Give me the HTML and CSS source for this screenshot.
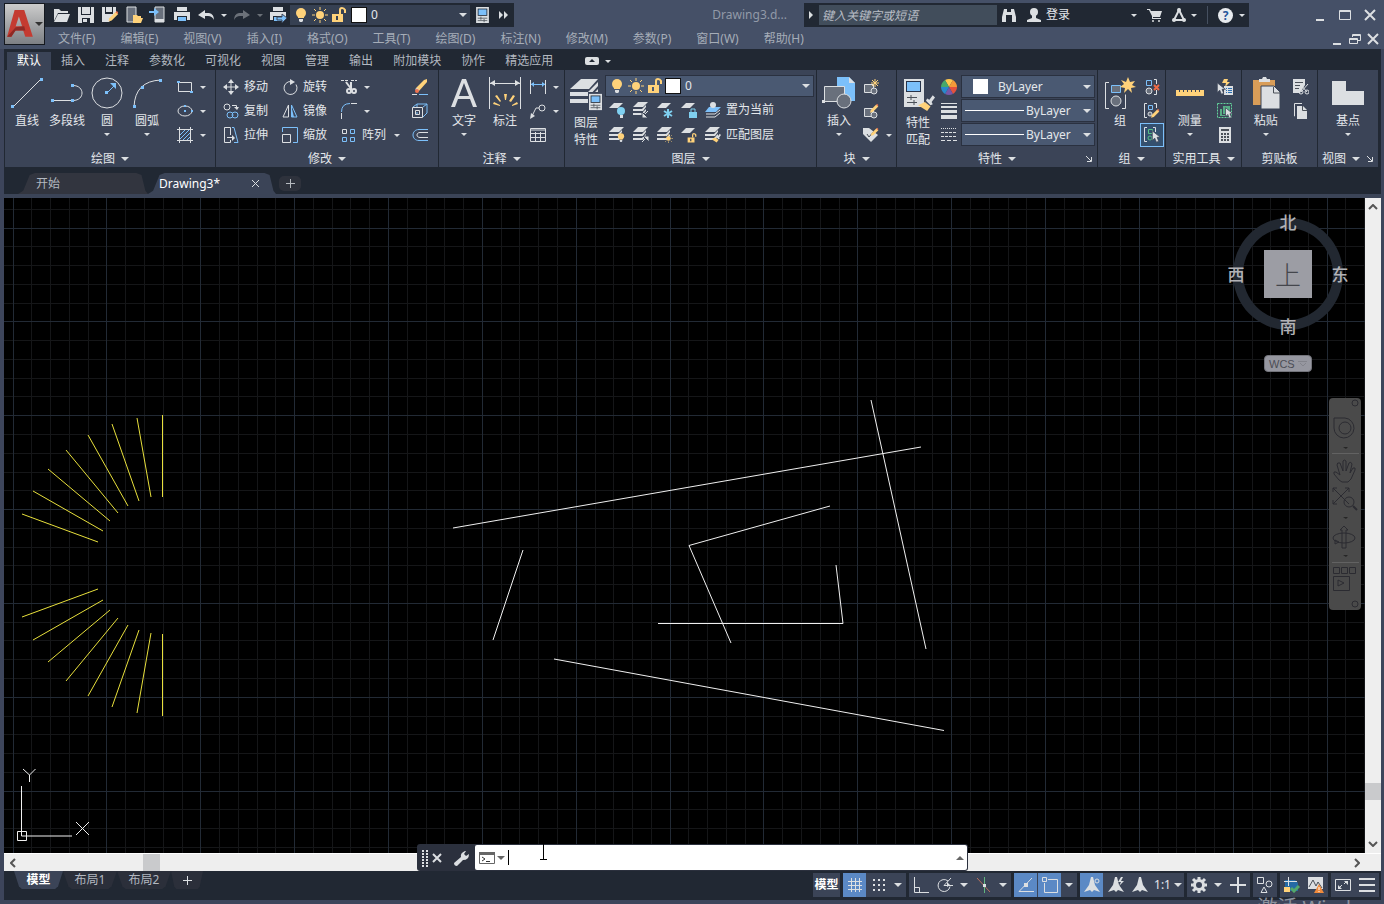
FILE: index.html
```
<!DOCTYPE html>
<html lang="zh-CN">

<head>
    <meta charset="UTF-8">
    <meta name="viewport" content="width=device-width, initial-scale=1.0">
    <title>Drawing3.dwg</title>
    <link rel="stylesheet" href="styles.css">
</head>

<body>
    <!-- Símbolos reutilizados -->
    <svg class="symbols" aria-hidden="true">
        <symbol id="bulb" viewBox="0 0 16 16"><circle class="fy" cx="8" cy="6" r="5"/><path class="fy" d="M5 9h6v2H5z"/><path class="fw" d="M6 12h4v2l-1 1H7l-1-1z"/></symbol>
        <symbol id="sun" viewBox="0 0 16 16"><circle class="fy" cx="8" cy="8" r="4"/><path class="ly" d="M8 0v3M8 13v3M0 8h3M13 8h3M2 2l2 2M12 12l2 2M14 2l-2 2M4 12l-2 2"/></symbol>
        <symbol id="unlock" viewBox="0 0 16 16"><path class="fy" fill-rule="evenodd" d="M1 7h11v8H1zM5 9v4h2V9z"/><path class="ly thick" d="M9 7V3q0-2 2-2t3 2v3"/></symbol>
        <symbol id="sheets" viewBox="0 0 16 16"><path class="fw" d="M5 0h10l-5 5H0zM0 7h9l4-4v2l-3 4H0zM0 11h9l4-4v2l-3 4H0z"/></symbol>
        <symbol id="sheet" viewBox="0 0 16 16"><path class="fw" d="M5 1h9L9 6H0z"/></symbol>
        <symbol id="pencil" viewBox="0 0 16 16"><path class="fy" d="M12 2l3 3-8 8-4 1 1-4z"/><path class="fr" d="M13 1l2 2-1 2-2-2z"/></symbol>
        <symbol id="brush" viewBox="0 0 16 16"><path class="fw" d="M11 5l3-4 2 2-3 4 1 2-2 1-4-4 1-2z"/><path class="fy" d="M7 7l5 4-3 4-8-5z"/></symbol>
        <symbol id="cursor" viewBox="0 0 16 16"><path class="fw edge" d="M4 1v12l3-3 2 5 3-1-2-5h4z"/></symbol>
        <symbol id="palette" viewBox="0 0 16 20"><path class="fw" d="M0 0h16v20H0z"/><path fill="#1f2937" d="M2 2h12v9H2z"/><path class="fb" d="M3 3h10v7H3z"/><path class="dark" d="M2 14h12M2 17h12M6 12v4M10 15v4"/></symbol>
        <symbol id="annot" viewBox="0 0 18 18"><path class="fw" d="M8 1h2l2 8 5 7-6-2-2 2-2-2-6 2 5-7z"/></symbol>
        <symbol id="printer" viewBox="0 0 18 18"><path class="fw" d="M4 1h10v4H4zM1 6h16v8h-3v-4H4v4H1z"/><path class="fb" d="M5 11h8v4H5z"/></symbol>
    </svg>

    <div class="app">
        <header class="titlebar">
            <button class="app-button" aria-label="应用程序菜单">
                <svg width="27" height="30" viewBox="0 0 25 28"><path fill="#c43b31" fill-rule="evenodd" d="M7 1h9l8 25h-7l-2-6H7l-3 6H0zM11 7l-3 9h6z"/><path fill="#8f2a25" d="M0 26l8-9 8-1 1 4H8l-4 6z"/></svg>
                <span class="caret large ink"></span>
            </button>
            <div class="header-main">
                <div class="title-row">
                    <div class="quick-access">
                        <button class="tool" aria-label="打开"><svg width="18" height="18" viewBox="0 0 18 18"><path class="fw" d="M1 3h5l2 2h7v2H5l-4 8z"/><path class="fw" d="M5 8h12l-3 8H1z"/></svg></button>
                        <button class="tool" aria-label="保存"><svg width="18" height="18" viewBox="0 0 18 18"><path class="fw" fill-rule="evenodd" d="M1 1h16v16H1zM4 1v8h10V1zM5 12v5h8v-5z"/><path class="fw" d="M5 1h8v7H5zM6 13h4v3H6z"/></svg></button>
                        <button class="tool" aria-label="另存为"><svg width="18" height="18" viewBox="0 0 18 18"><path class="fw" fill-rule="evenodd" d="M1 1h14v5l-7 10H1zM4 1v7h8V1z"/><path class="fw" d="M5 1h6v5H5z"/><use href="#pencil" x="5" y="4" width="13" height="13"/></svg></button>
                        <button class="tool" aria-label="从移动设备打开"><svg width="18" height="18" viewBox="0 0 18 18"><path class="fg lw" d="M2 1h9v15H2z"/><path class="fy" d="M8 9h4l1 1h3v2h2l-2 5H8z"/></svg></button>
                        <button class="tool" aria-label="保存到移动设备"><svg width="18" height="18" viewBox="0 0 18 18"><path class="fg lw" d="M6 1h9v15H6z"/><path class="fw" d="M6 13h9v3H6z"/><path class="fb" d="M0 5h5V2l5 4-5 4V7H0z"/></svg></button>
                        <button class="tool" aria-label="打印"><svg width="18" height="18"><use href="#printer"/></svg></button>
                        <button class="tool" aria-label="放弃"><svg width="18" height="18" viewBox="0 0 18 18"><path class="fw" d="M1 9l7-5v3h4q5 1 5 7-2-4-6-4H8v3z"/></svg></button>
                        <button class="drop" aria-label="放弃列表"><span class="caret"></span></button>
                        <button class="tool dim" aria-label="重做"><svg width="18" height="18" viewBox="0 0 18 18"><path class="fw" d="M17 9l-7-5v3H6q-5 1-5 7 2-4 6-4h3v3z"/></svg></button>
                        <button class="drop dim" aria-label="重做列表"><span class="caret"></span></button>
                        <button class="tool" aria-label="批处理打印"><svg width="18" height="18"><use href="#printer"/><path class="fb edge" d="M8 11h5V8l5 4-5 5v-3H8z"/></svg></button>
                        <div class="layer-select quick">
                            <svg width="16" height="16"><use href="#bulb"/></svg>
                            <svg width="16" height="16"><use href="#sun"/></svg>
                            <svg width="16" height="16"><use href="#unlock"/></svg>
                            <span class="swatch"></span>
                            <select aria-label="当前图层"><option>0</option></select>
                            <span class="caret large"></span>
                        </div>
                        <button class="tool" aria-label="图层特性"><svg width="13" height="16" viewBox="0 0 16 20"><use href="#palette"/></svg></button>
                        <button class="drop wide" aria-label="更多"><svg width="10" height="8" viewBox="0 0 10 8"><path class="fw" d="M0 0l4 4-4 4zM5 0l4 4-4 4z"/></svg></button>
                    </div>
                    <h1 class="doc-title">Drawing3.d...</h1>
                    <div class="info-center">
                        <span class="arrow-right"></span>
                        <input class="search" type="text" placeholder="键入关键字或短语" aria-label="搜索">
                        <button class="tool" aria-label="查找"><svg width="16" height="16" viewBox="0 0 16 16"><path class="fw" d="M3 2h3v3h4V2h3l2 8v5h-4V8H5v7H1v-5z"/></svg></button>
                        <button class="login"><svg width="16" height="16" viewBox="0 0 16 16"><circle class="fw" cx="8" cy="5" r="4"/><path class="fw" d="M6 8h4v3l5 2v2H1v-2l5-2z"/></svg>登录<span class="caret"></span></button>
                        <button class="tool" aria-label="应用商店"><svg width="16" height="16" viewBox="0 0 16 16"><path class="fw" d="M0 2h3l1 2h11l-2 6H6v1h8v1H5V9L2 3H0z"/><circle class="fw" cx="6" cy="14" r="1"/><circle class="fw" cx="12" cy="14" r="1"/></svg></button>
                        <button class="tool" aria-label="保持连接"><svg width="16" height="16" viewBox="0 0 16 16"><path class="lw thick" d="M8 3l5 10H3z"/><circle class="fw" cx="8" cy="3" r="2"/><circle class="fw" cx="3" cy="13" r="2"/><circle class="fw" cx="13" cy="13" r="2"/></svg></button>
                        <span class="caret"></span>
                        <span class="separator"></span>
                        <button class="help" aria-label="帮助">?</button>
                        <span class="caret"></span>
                    </div>
                    <div class="window-buttons">
                        <button aria-label="最小化"><svg width="14" height="14" viewBox="0 0 14 14"><path class="lw thick" d="M3 12h8"/></svg></button>
                        <button aria-label="最大化"><svg width="14" height="14" viewBox="0 0 14 14"><path class="lw" d="M1.500 2.500h11v9h-11zM1 3.500h12"/></svg></button>
                        <button aria-label="关闭"><svg width="14" height="14" viewBox="0 0 14 14"><path class="lw thick" d="M2 2l10 10M12 2L2 12"/></svg></button>
                    </div>
                </div>
                <div class="menu-row">
                    <nav class="menubar" aria-label="菜单">
                        <a href="#">文件(F)</a><a href="#">编辑(E)</a><a href="#">视图(V)</a><a href="#">插入(I)</a><a href="#">格式(O)</a><a href="#">工具(T)</a><a href="#">绘图(D)</a><a href="#">标注(N)</a><a href="#">修改(M)</a><a href="#">参数(P)</a><a href="#">窗口(W)</a><a href="#">帮助(H)</a>
                    </nav>
                    <div class="window-buttons small">
                        <button aria-label="最小化图形"><svg width="14" height="14" viewBox="0 0 14 14"><path class="lw thick" d="M3 12h8"/></svg></button>
                        <button aria-label="还原图形"><svg width="14" height="14" viewBox="0 0 14 14"><path class="lw" d="M4.500 5V2.500h8v6H9M4 3.500h8M1.500 6.500h8v5h-8zM1 7.500h8"/></svg></button>
                        <button aria-label="关闭图形"><svg width="14" height="14" viewBox="0 0 14 14"><path class="lw thick" d="M2 2l10 10M12 2L2 12"/></svg></button>
                    </div>
                </div>
            </div>
        </header>

        <nav class="ribbon-tabs" aria-label="功能区选项卡">
            <button class="active">默认</button><button>插入</button><button>注释</button><button>参数化</button><button>可视化</button><button>视图</button><button>管理</button><button>输出</button><button>附加模块</button><button>协作</button><button>精选应用</button>
            <button class="ribbon-toggle" aria-label="最小化功能区"><svg width="14" height="8" viewBox="0 0 14 8"><rect class="fw" width="14" height="8" rx="2"/><path fill="#212833" d="M4 5l3-3 3 3z"/></svg><span class="caret"></span></button>
        </nav>

        <div class="ribbon">
            <!-- Desenho -->
            <section class="panel">
                <div class="panel-body">
                    <button class="big"><svg width="34" height="32" viewBox="0 0 34 32"><path class="lw" d="M3 30L31 2"/><path class="fb" d="M1 28h3v3H1zM30 1h3v3h-3z"/></svg>直线</button>
                    <button class="big"><svg width="34" height="32" viewBox="0 0 34 32"><path class="lw" d="M3 23.500h20c12 0 12-15 0-15"/><path class="fb" d="M1 22h3v3H1zM21 22h3v3h-3zM21 7h3v3h-3z"/></svg>多段线</button>
                    <button class="big"><svg width="34" height="32" viewBox="0 0 34 32"><circle class="lw" cx="17" cy="16" r="15"/><path class="lb" d="M17 16l8-8"/><path class="fb" d="M15 14h3v3h-3zM26 6v6l-6-6z"/></svg>圆<span class="caret"></span></button>
                    <button class="big"><svg width="34" height="32" viewBox="0 0 34 32"><path class="lw" d="M4 30Q5 4 31 3"/><path class="fb" d="M3 28h3v3H3zM11 9h3v3h-3zM29 2h3v3h-3z"/></svg>圆弧<span class="caret"></span></button>
                    <div class="stack first">
                        <div class="line"><button class="tool" aria-label="矩形"><svg width="16" height="16" viewBox="0 0 16 16"><path class="lw" d="M1.500 3.500h13v9h-13z"/><path class="fb" d="M0 2h3v2H0zM13 12h3v2h-3z"/></svg></button><span class="caret"></span></div>
                        <div class="line"><button class="tool" aria-label="椭圆"><svg width="16" height="16" viewBox="0 0 16 16"><ellipse class="lw" cx="8" cy="8" rx="7" ry="5"/><path class="fb" d="M7 7h2v2H7zM14 7h2v2h-2zM7 2h2v2H7z"/></svg></button><span class="caret"></span></div>
                        <div class="line"><button class="tool" aria-label="图案填充"><svg width="16" height="16" viewBox="0 0 16 16"><path class="lb" d="M3 8l5-5M3 12l9-9M6 13l7-7M10 13l3-3"/><path class="lw" d="M2.500 0v16M13.500 0v16M0 2.500h16M0 13.500h16"/></svg></button><span class="caret"></span></div>
                    </div>
                </div>
                <button class="panel-title">绘图<span class="caret large"></span></button>
            </section>

            <!-- Modificação -->
            <section class="panel">
                <div class="panel-body modify">
                    <div class="stack">
                        <button class="command"><svg width="16" height="16" viewBox="0 0 16 16"><path class="lw" d="M8 2v12M2 8h12"/><path class="fw" d="M8 0l3 4H5zM8 16l3-4H5zM0 8l4-3v6zM16 8l-4-3v6z"/></svg>移动</button>
                        <button class="command"><svg width="16" height="16" viewBox="0 0 16 16"><circle class="lw" cx="4" cy="4" r="3"/><path class="lw" d="M9 2.500h4.500V5"/><path class="fw" d="M11 4h5l-2 3z"/><circle class="lb" cx="7" cy="12" r="3"/><circle class="lb" cx="12" cy="12" r="3"/></svg>复制</button>
                        <button class="command"><svg width="16" height="16" viewBox="0 0 16 16"><path class="lw" d="M7.500 8V.500h-6v15h6V13M4 10.500h6"/><path class="fw" d="M9 8l3 3-3 3z"/><path class="lb" d="M9 .500h2l4 15h-4"/></svg>拉伸</button>
                    </div>
                    <div class="stack">
                        <button class="command"><svg width="16" height="16" viewBox="0 0 16 16"><path class="lw" d="M9 2.500a6.500 6.500 0 1 0 5 3"/><path class="fw" d="M8 0l5 3-5 3z"/></svg>旋转</button>
                        <button class="command"><svg width="16" height="16" viewBox="0 0 16 16"><path class="lw" d="M6.500 2v12H1z"/><path class="lb" d="M9.500 2v12H15z"/><path class="fb" d="M9 2l3 12H9z"/></svg>镜像</button>
                        <button class="command"><svg width="16" height="16" viewBox="0 0 16 16"><path class="lb" d="M.500 5V.500h15v15H11"/><path class="lw" d="M.500 7.500h8v8h-8z"/></svg>缩放</button>
                    </div>
                    <div class="stack array">
                        <div class="line"><button class="tool" aria-label="修剪"><svg width="16" height="16" viewBox="0 0 16 16"><path class="lw" d="M0 1.500h7M10 1.500h6" stroke-dasharray="3 1"/><path class="lw thick" d="M5 3l6 8M10 3v7"/><circle class="lw thick" cx="8" cy="12" r="2"/><circle class="lw thick" cx="13" cy="12" r="2"/></svg></button><span class="caret"></span></div>
                        <div class="line"><button class="tool" aria-label="圆角"><svg width="16" height="16" viewBox="0 0 16 16"><path class="lb" d="M.500 9q0-8.500 8.500-8.500"/><path class="lw" d="M10 .500h6M.500 10v6"/></svg></button><span class="caret"></span></div>
                        <button class="command"><svg width="16" height="16" viewBox="0 0 16 16"><path class="lw" d="M1.500 2.500h4v4h-4z"/><path class="lb" d="M9.500 2.500h4v4h-4zM1.500 10.500h4v4h-4zM9.500 10.500h4v4h-4z"/></svg>阵列<span class="caret"></span></button>
                    </div>
                    <div class="stack">
                        <button class="tool" aria-label="删除"><svg width="16" height="16" viewBox="0 0 16 16"><path class="fy" d="M12 1l3-1v3l-8 9-3-3z"/><path class="fw" d="M5 9l2 2-1 2-3-3z"/><circle class="fr" cx="5" cy="12" r="2"/><path class="lw" d="M0 15.500h5"/><path class="lb" d="M7 15.500h9"/></svg></button>
                        <button class="tool" aria-label="分解"><svg width="16" height="16" viewBox="0 0 16 16"><path class="lb" d="M1 4l4-3h10v9l-4 4M5 1v4M15 1l-4 3M5 9v2"/><path class="lw" d="M.500 4.500h10v10H.500zM3.500 7.500h4v4h-4z"/></svg></button>
                        <button class="tool" aria-label="偏移"><svg width="16" height="16" viewBox="0 0 16 16"><path class="lb" d="M16 2.500H7c-8 0-8 11 0 11h9"/><path class="lw" d="M16 5.500H8c-4 0-4 5 0 5h8"/></svg></button>
                    </div>
                </div>
                <button class="panel-title">修改<span class="caret large"></span></button>
            </section>

            <!-- Anotação -->
            <section class="panel">
                <div class="panel-body annotate">
                    <button class="big"><svg width="34" height="32" viewBox="0 0 34 32"><path class="fw" fill-rule="evenodd" d="M15 2h4l11 28h-4l-3-8H11l-3 8H4zM17 6l-5 13h10z"/></svg>文字<span class="caret"></span></button>
                    <button class="big"><svg width="34" height="32" viewBox="0 0 34 32"><path class="lw" d="M1.500 0v32M32.500 0v32M2 6.500h30"/><path class="fw" d="M2 6l5-3v6zM32 6l-5-3v6z"/><path class="fy" d="M16 17h3l-1 6h-1zM7 19l2-1 4 6-1 1zM25 18l2 1-4 6-2-1zM5 27l1-2 6 3v1zM29 25l1 2-6 2v-1z"/></svg>标注</button>
                    <div class="stack">
                        <div class="line"><button class="tool" aria-label="线性标注"><svg width="16" height="16" viewBox="0 0 16 16"><path class="lw" d="M.500 1v14M15.500 1v14"/><path class="lb" d="M1 5.500h14"/><path class="fb" d="M1 5l3-2v5zM15 5l-3-2v5z"/></svg></button><span class="caret"></span></div>
                        <div class="line"><button class="tool" aria-label="引线"><svg width="16" height="16" viewBox="0 0 16 16"><circle class="lw" cx="12" cy="5" r="3"/><path class="lw" d="M9 5H6L2 13"/><path class="fw" d="M0 16l1-6 4 3z"/></svg></button><span class="caret"></span></div>
                        <button class="tool" aria-label="表格"><svg width="16" height="16" viewBox="0 0 16 16"><path class="lw" d="M.500 1.500h15v13H.500zM1 3h14M0 6.500h16M0 10.500h16M5.500 5v10M10.500 5v10"/></svg></button>
                    </div>
                </div>
                <button class="panel-title">注释<span class="caret large"></span></button>
            </section>

            <!-- Camadas -->
            <section class="panel">
                <div class="panel-body">
                    <button class="big two"><svg width="34" height="32" viewBox="0 0 34 32"><path class="fw" d="M12 0h17l-9 10H1zM1 13h18l10-10v4l-9 10H1zM1 20h18l10-10v4l-9 10H1z"/><path fill="#3b4457" d="M19 13h15v19H19z"/><use href="#palette" x="20" y="14" width="13" height="18"/></svg>图层<br>特性</button>
                    <div class="stack grow">
                        <div class="layer-select">
                            <svg width="16" height="16"><use href="#bulb"/></svg>
                            <svg width="16" height="16"><use href="#sun"/></svg>
                            <svg width="16" height="16"><use href="#unlock"/></svg>
                            <span class="swatch"></span>
                            <select aria-label="图层"><option>0</option></select>
                            <span class="caret large"></span>
                        </div>
                        <div class="line">
                            <button class="tool" aria-label="关"><svg width="16" height="16"><use href="#sheet"/><circle cx="12" cy="9" r="4" fill="#7fd0f0"/><path class="fw" d="M11 13h3v3h-3z"/></svg></button>
                            <button class="tool" aria-label="隔离"><svg width="16" height="16"><use href="#sheets"/><path class="lw" d="M15 9l-5 5"/><path class="fw edge" d="M9 10v6h6z"/></svg></button>
                            <button class="tool" aria-label="冻结"><svg width="16" height="16"><use href="#sheet"/><path stroke="#7fd0f0" stroke-width="2" d="M11 7v9M7 9l8 5M15 9l-8 5"/></svg></button>
                            <button class="tool" aria-label="锁定"><svg width="16" height="16"><use href="#sheet"/><path fill="#7fd0f0" d="M8 10h8v6H8z"/><path fill="none" stroke="#7fd0f0" d="M10 10V7h4v3"/></svg></button>
                            <button class="command"><svg width="16" height="16" viewBox="0 0 16 16"><path class="fb" d="M4 5h12l-5 5H0z"/><circle class="fw" cx="8" cy="3" r="3"/><path class="lw" d="M1 12h9l5-4M1 15h9l5-4"/></svg>置为当前</button>
                        </div>
                        <div class="line">
                            <button class="tool" aria-label="打开所有图层"><svg width="16" height="16"><use href="#sheets"/><use href="#bulb" x="7" y="5" width="10" height="11"/></svg></button>
                            <button class="tool" aria-label="取消隔离"><svg width="16" height="16"><use href="#sheets"/><path class="lw" d="M9 15l5-5"/><path class="fw edge" d="M10 9h6v6z"/></svg></button>
                            <button class="tool" aria-label="解冻"><svg width="16" height="16"><use href="#sheets"/><use href="#sun" x="7" y="7" width="9" height="9"/></svg></button>
                            <button class="tool" aria-label="解锁"><svg width="16" height="16"><use href="#sheet"/><use href="#unlock" x="6" y="6" width="10" height="10"/></svg></button>
                            <button class="command"><svg width="16" height="16"><use href="#sheets"/><use href="#brush" x="6" y="6" width="10" height="10"/></svg>匹配图层</button>
                        </div>
                    </div>
                </div>
                <button class="panel-title">图层<span class="caret large"></span></button>
            </section>

            <!-- Bloco -->
            <section class="panel">
                <div class="panel-body">
                    <button class="big"><svg width="34" height="32" viewBox="0 0 34 32"><path class="fb" d="M15 0h12l6 6v18H15z"/><path class="fw" d="M27 0l6 6h-6z"/><path class="fg lw" d="M2.500 9.500h20v15h-20z"/><circle class="fg lw" cx="22" cy="24" r="7"/><path class="fw" d="M0 23h3v3H0z"/></svg>插入<span class="caret"></span></button>
                    <div class="stack">
                        <button class="tool" aria-label="创建块"><svg width="16" height="16" viewBox="0 0 16 16"><path class="fg lw" d="M1.500 5.500h9v8h-9z"/><circle class="fg lw" cx="11" cy="12" r="3"/><path class="ly" d="M12 0v8M8 4h8M9 1l6 6M15 1L9 7"/></svg></button>
                        <button class="tool" aria-label="编辑块"><svg width="16" height="16" viewBox="0 0 16 16"><path class="fg lw" d="M1.500 5.500h9v8h-9z"/><circle class="fg lw" cx="11" cy="12" r="3"/><use href="#pencil" x="5" y="0" width="11" height="11"/></svg></button>
                        <div class="line"><button class="tool" aria-label="编辑属性"><svg width="16" height="16" viewBox="0 0 16 16"><path class="fw" d="M0 1h6l9 7-7 7-8-8z"/><path class="dark" d="M4 7l2 3 5-6"/><use href="#pencil" x="6" y="0" width="10" height="10"/></svg></button><span class="caret"></span></div>
                    </div>
                </div>
                <button class="panel-title">块<span class="caret large"></span></button>
            </section>

            <!-- Propriedades -->
            <section class="panel">
                <div class="panel-body">
                    <button class="big two"><svg width="34" height="32" viewBox="0 0 34 32"><path class="fw" d="M3 0h20v28H3z"/><path fill="#26334a" d="M5 2h15v11H5z"/><path class="fb" d="M6 3h13v9H6z"/><path class="dark" d="M6 18.500h10M6 23.500h10M10 16v5M13 21v5"/><use href="#brush" x="16" y="15" width="18" height="18"/></svg>特性<br>匹配</button>
                    <div class="stack">
                        <button class="tool" aria-label="对象颜色"><svg width="16" height="16" viewBox="0 0 16 16"><path fill="#ffc84e" d="M8 8L4 1q4-2 8 0z"/><path fill="#f49a38" d="M8 8l4-7q4 3 4 7z"/><path fill="#e4523e" d="M8 8h8q0 4-4 7z"/><path fill="#7757a8" d="M8 8l4 7q-4 2-8 0z"/><path fill="#2989cc" d="M8 8l-4 7q-4-3-4-7z"/><path fill="#46a96b" d="M8 8H0q0-4 4-7z"/></svg></button>
                        <button class="tool" aria-label="线宽"><svg width="16" height="16" viewBox="0 0 16 16"><path class="fw" d="M0 0h16v1H0zM0 3h16v2H0zM0 7h16v3H0zM0 12h16v4H0z"/></svg></button>
                        <button class="tool" aria-label="线型"><svg width="16" height="16" viewBox="0 0 16 16"><path class="lw" stroke-dasharray="1 1" d="M0 1.500h16"/><path class="lw" stroke-dasharray="3 1" d="M0 5.500h16M0 9.500h16"/><path class="lw" stroke-dasharray="4 2" d="M0 13.500h16"/></svg></button>
                    </div>
                    <div class="stack grow">
                        <div class="property"><span class="swatch"></span><select class="color" aria-label="颜色"><option>ByLayer</option></select><span class="caret large"></span></div>
                        <div class="property"><span class="sample"></span><select aria-label="线宽值"><option>ByLayer</option></select><span class="caret large"></span></div>
                        <div class="property"><span class="sample"></span><select aria-label="线型值"><option>ByLayer</option></select><span class="caret large"></span></div>
                    </div>
                </div>
                <button class="panel-title">特性<span class="caret large"></span><svg class="launcher" width="6" height="6" viewBox="0 0 6 6"><path class="lw" d="M0 0l5 5M5.500 1v4.500H1"/></svg></button>
            </section>

            <!-- Grupo -->
            <section class="panel">
                <div class="panel-body">
                    <button class="big"><svg width="34" height="32" viewBox="0 0 34 32"><path class="lw" d="M6 5.500H2.500v26H6M19 31.500h3.500v-14"/><path class="lb fg" d="M8.500 8.500h9v7h-9z"/><circle class="fg lw" cx="13" cy="24" r="5"/><path class="fy" d="M25 0l2 5 5-1-3 4 4 2-5 1 1 5-4-4-4 4 1-5-5-1 4-3-3-4 5 2z"/></svg>组</button>
                    <div class="stack">
                        <button class="tool" aria-label="解除编组"><svg width="16" height="16" viewBox="0 0 16 16"><path class="lb" d="M2.500 1.500h5v5h-5z"/><circle class="fg lw" cx="5" cy="12" r="3"/><path class="lw" d="M10 .500h2.500V5M12.500 11v4.500H10"/><path stroke="#ee6a45" stroke-width="2" d="M10 6l5 5M15 6l-5 5"/></svg></button>
                        <button class="tool" aria-label="组编辑"><svg width="16" height="16" viewBox="0 0 16 16"><path class="lw" d="M3 .500H.500v14H3M10 .500h2.500V5"/><path class="lb" d="M4.500 2.500h4v4h-4z"/><circle class="fg lw" cx="6" cy="11" r="2"/><use href="#pencil" x="5" y="5" width="11" height="11"/></svg></button>
                        <button class="tool checked" aria-label="启用组选择"><svg width="16" height="16" viewBox="0 0 16 16"><path class="lw" d="M3 .500H.500v14H3M9 .500h2.500V5"/><path stroke="#57c287" fill="none" d="M4.500 2.500h4v4h-4z"/><circle stroke="#57c287" fill="none" cx="6" cy="11" r="2"/><use href="#cursor" x="5" y="3" width="13" height="13"/></svg></button>
                    </div>
                </div>
                <button class="panel-title">组<span class="caret large"></span></button>
            </section>

            <!-- Utilitários -->
            <section class="panel">
                <div class="panel-body spread">
                    <button class="big"><svg width="34" height="32" viewBox="0 0 34 32"><path class="fy" d="M3 13h28v6H3z"/><path stroke="#3b4457" d="M6.500 12v3M10.500 12v3M14.500 12v3M18.500 12v3M22.500 12v3M26.500 12v3"/></svg>测量<span class="caret"></span></button>
                    <div class="stack">
                        <button class="tool" aria-label="快速选择"><svg width="16" height="16" viewBox="0 0 16 16"><path class="fy" d="M7 0l4 0-1 3 3 0-5 5 1-4H5z"/><path class="fw" d="M7 7h9v9H7z"/><path stroke="#2b6fb2" d="M9 9.500h1M11 9.500h4M9 11.500h1M11 11.500h4M9 13.500h1M11 13.500h4"/><use href="#cursor" x="-3" y="3" width="13" height="13"/></svg></button>
                        <button class="tool" aria-label="全部选择"><svg width="16" height="16" viewBox="0 0 16 16"><path fill="none" stroke="#63d39b" stroke-dasharray="2 1" d="M.500 .500h14v14H.500z"/><path fill="#58ad86" d="M6 3h7v8H6zM3 6h2v6h6v1H3z"/><use href="#cursor" x="5" y="4" width="13" height="12"/></svg></button>
                        <button class="tool" aria-label="快速计算器"><svg width="16" height="16" viewBox="0 0 16 16"><path class="fw" d="M2 0h12v16H2z"/><path class="dark thick" d="M4 3h8M4 7h2M7 7h2M10 7h2M4 10h2M7 10h2M10 10h2M4 13h2M7 13h2M10 13h2"/></svg></button>
                    </div>
                </div>
                <button class="panel-title">实用工具<span class="caret large"></span></button>
            </section>

            <!-- Área de transferência -->
            <section class="panel">
                <div class="panel-body spread">
                    <button class="big"><svg width="34" height="32" viewBox="0 0 34 32"><path fill="#d99d58" d="M4 3h22v25H4z"/><path class="fw" d="M10 2h3l1-2h3l1 2h3v3H10z"/><path class="fw edge" d="M12 9h13l6 6v17H12z"/><path class="dark" d="M24.500 10v6H31"/></svg>粘贴<span class="caret"></span></button>
                    <div class="stack">
                        <button class="tool" aria-label="剪切"><svg width="16" height="16" viewBox="0 0 16 16"><path class="fw" d="M0 0h12v6l-5 8H0z"/><path class="dark" d="M2 3.500h8M2 6.500h5M2 9.500h4"/><path class="lw" d="M7 5l7 8M15 5l-7 8"/><circle class="lw" cx="8" cy="13" r="2"/><circle class="lw" cx="14" cy="13" r="2"/></svg></button>
                        <button class="tool" aria-label="复制到剪贴板"><svg width="16" height="16" viewBox="0 0 16 16"><path class="lw" d="M2 13h-.500V.500H9"/><path class="fw" d="M4 3h6l4 4v9H4z"/><path class="dark" d="M9.500 3v4.500H14"/></svg></button>
                    </div>
                </div>
                <button class="panel-title">剪贴板</button>
            </section>

            <!-- Vista -->
            <section class="panel">
                <div class="panel-body center">
                    <button class="big"><svg width="34" height="32" viewBox="0 0 34 32"><path class="fw" d="M1 4h14v10h18v14H1z"/></svg>基点<span class="caret"></span></button>
                </div>
                <button class="panel-title view">视图<span class="caret large"></span><svg class="launcher" width="6" height="6" viewBox="0 0 6 6"><path class="lw" d="M0 0l5 5M5.500 1v4.500H1"/></svg></button>
            </section>
        </div>

        <nav class="file-tabs" aria-label="图形">
            <button class="file-tab">开始</button>
            <button class="file-tab active">Drawing3*<svg width="9" height="9" viewBox="0 0 9 9"><path class="lw" d="M1 1l7 7M8 1L1 8"/></svg></button>
            <button class="new-tab" aria-label="新图形"><svg width="9" height="9" viewBox="0 0 9 9"><path class="lw" d="M0 4.500h9M4.500 0v9"/></svg></button>
        </nav>

        <main class="workspace">
            <div class="canvas">
                <svg class="drawing" role="img" aria-label="模型空间">
                    <path id="gridMinor" class="grid-minor"/>
                    <path id="gridMajor" class="grid-major"/>
                    <g transform="translate(-4 -198)">
                        <path class="yellow-lines" d="M162.500 415v82M137 418l14 79M112 424l27 77M88 435l40 71M66 450l52 63M48 469l62 52M33 491l70 40M22 514l76 28M98 589l-76 28M103 600l-70 40M110 610l-62 52M118 618l-52 63M128 625l-40 71M139 630l-27 77M151 633l-14 80M162.500 634v82"/>
                        <path class="white-lines" d="M453 528l468-81M523 550l-30 90M830 506l-141 39.500 42 97.500M871 400l55 249M836 565l7 58.500H658M554 659l390 71.500"/>
                        <!-- Ícone do UCS -->
                        <path class="white-lines" d="M21.500 786v50H72M17.500 831.500h9v9h-9zM23 769l6.500 6 6-6M29.500 775v7M76 822l13 13M89 822l-13 13"/>
                    </g>
                </svg>
                <div class="view-cube">
                    <span class="north">北</span>
                    <span class="west">西</span>
                    <button class="face">上</button>
                    <span class="east">东</span>
                    <span class="south">南</span>
                </div>
                <button class="wcs">WCS <svg width="9" height="7" viewBox="0 0 9 7"><path fill="none" stroke="#83848c" d="M0 1.500h9M2 3l3 3 3-3"/></svg></button>
                <div class="nav-bar">
                    <svg width="32" height="212" viewBox="0 0 32 212">
                        <path stroke="#626262" d="M3 55.500h27M3 164.500h27"/>
                        <g class="nav-lines">
                            <circle cx="26" cy="5" r="3"/><circle cx="26" cy="206" r="3"/>
                            <path d="M5 20h11a10 10 0 1 1-11 10z"/><circle cx="16" cy="30" r="6"/>
                            <path d="M10 82l-5-6q-1-3 2-2l4 3-3-10q0-3 3-2l3 8V63q1-2 3 0v10l3-8q2-2 3 1l-2 9 3-5q3-1 2 2l-4 9-3 3h-6z"/>
                            <path d="M4 90l16 16M20 90L4 106M4 94v-4h4M20 94v-4h-4M4 102v4h4"/><circle cx="20" cy="104" r="5"/><path class="thick" d="M24 108l4 4"/>
                            <ellipse cx="15" cy="140" rx="11" ry="5"/><path d="M13 150v-18h-2l4-4 4 4h-2v18zM6 142v4l4-2z"/>
                            <path d="M4.500 169.500h6v6h-6zM12.500 169.500h6v6h-6zM20.500 169.500h6v6h-6zM4.500 178.500h16v14h-16zM9 182v6l6-3z"/>
                        </g>
                        <path fill="#262626" d="M14 49h5l-2 2zM14 119h5l-2 2zM14 157h5l-2 2z"/>
                    </svg>
                </div>
            </div>
            <div class="scroll vertical">
                <button aria-label="向上"><svg width="10" height="6" viewBox="0 0 10 6"><path class="arrow" d="M1 5l4-4 4 4"/></svg></button>
                <span class="thumb"></span>
                <button aria-label="向下"><svg width="10" height="6" viewBox="0 0 10 6"><path class="arrow" d="M1 1l4 4 4-4"/></svg></button>
            </div>
            <div class="scroll horizontal">
                <button aria-label="向左"><svg width="6" height="10" viewBox="0 0 6 10"><path class="arrow" d="M5 1L1 5l4 4"/></svg></button>
                <span class="thumb"></span>
                <button aria-label="向右"><svg width="6" height="10" viewBox="0 0 6 10"><path class="arrow" d="M1 1l4 4-4 4"/></svg></button>
            </div>
            <div class="command-line">
                <span class="grip"></span>
                <button aria-label="关闭命令行"><svg width="10" height="10" viewBox="0 0 10 10"><path class="lw thick" d="M1 1l8 8M9 1L1 9"/></svg></button>
                <button class="wrench" aria-label="自定义"><svg width="16" height="16" viewBox="0 0 16 16"><path class="fw" d="M1 13l7-6q-1-4 4-6l1 0-2 3 2 2 3-2q0 6-6 6l-6 6q-3 0-3-3z"/></svg></button>
                <div class="command-box">
                    <svg width="16" height="12" viewBox="0 0 16 12"><path fill="#fff" stroke="#666" d="M.500 .500h15v11H.500z"/><path fill="#666" d="M0 0h16v3H0z"/><path fill="none" stroke="#333" d="M3 5l3 2-3 2M7 9.500h4"/></svg>
                    <span class="caret large grey"></span>
                    <span class="text-cursor"></span>
                    <input type="text" aria-label="命令">
                    <span class="caret-up"></span>
                </div>
                <svg class="pointer" width="7" height="16" viewBox="0 0 7 16"><path stroke="#000" d="M3.500 0v15M0 15.500h7"/></svg>
            </div>
        </main>

        <footer class="statusbar">
            <nav class="layout-tabs" aria-label="布局">
                <button class="active">模型</button><button>布局1</button><button>布局2</button><button class="plus" aria-label="新建布局"><svg width="9" height="9" viewBox="0 0 9 9"><path class="lw" d="M0 4.500h9M4.500 0v9"/></svg></button>
            </nav>
            <div class="status-tools">
                <div class="group"><button class="model">模型</button></div>
                <div class="group">
                    <button class="on" aria-label="栅格"><svg width="16" height="16" viewBox="0 0 16 16"><path class="lw" d="M4.500 1v14M8.500 1v14M12.500 1v14M1 4.500h14M1 8.500h14M1 12.500h14"/></svg></button>
                    <button aria-label="捕捉"><svg width="14" height="14" viewBox="0 0 14 14"><path class="fw" d="M1 1h2v2H1zM6 1h2v2H6zM11 1h2v2h-2zM1 6h2v2H1zM6 6h2v2H6zM11 6h2v2h-2zM1 11h2v2H1zM6 11h2v2H6zM11 11h2v2h-2z"/></svg></button>
                    <span class="caret large"></span>
                </div>
                <div class="group">
                    <button aria-label="正交"><svg width="16" height="16" viewBox="0 0 16 16"><path class="lw" d="M1.500 0v15.500H16M1.500 10.500h5v5"/></svg></button>
                    <button aria-label="极轴"><svg width="16" height="16" viewBox="0 0 16 16"><path class="lw" d="M13 9.500A6 6 0 1 1 11 4M7 8.500h9M7 8.500L14 1"/><path class="fw" d="M10 5l3 3-3 2z"/></svg></button>
                    <span class="caret large"></span>
                    <button aria-label="等轴测"><svg width="16" height="16" viewBox="0 0 16 16"><path stroke="#b6705e" d="M1 1l13 14"/><path stroke="#61b47e" d="M8.500 0v16"/><path class="fw" d="M7 7h3v3H7z"/></svg></button>
                    <span class="caret large"></span>
                </div>
                <div class="group">
                    <button class="on" aria-label="对象捕捉追踪"><svg width="16" height="16" viewBox="0 0 16 16"><path class="lw" d="M14 1L1 14.500h15"/><path class="fw" d="M6 6h4v4H6z"/></svg></button>
                    <button class="on" aria-label="对象捕捉"><svg width="16" height="16" viewBox="0 0 16 16"><path class="lw" d="M6 2.500h9.500v13h-13V6M.500 .500h4v4h-4z"/></svg></button>
                    <span class="caret large"></span>
                </div>
                <div class="group">
                    <button class="on" aria-label="注释可见性"><svg width="18" height="18"><use href="#annot"/><circle class="lw" cx="14" cy="5" r="2"/></svg></button>
                    <button aria-label="自动缩放"><svg width="18" height="18"><use href="#annot"/><path class="fw" d="M14 1l-3 5h3l-2 4 5-5h-3l2-4z"/></svg></button>
                    <button aria-label="注释比例"><svg width="18" height="18"><use href="#annot"/></svg></button>
                    <button class="scale">1:1<span class="caret large"></span></button>
                </div>
                <div class="group">
                    <button aria-label="切换工作空间"><svg width="16" height="16" viewBox="0 0 16 16"><path class="lw gear" d="M8 0v16M0 8h16M2 2l12 12M14 2L2 14"/><circle class="fw" cx="8" cy="8" r="6"/><circle cx="8" cy="8" r="3" fill="#3b4457"/></svg></button>
                    <span class="caret large"></span>
                    <button aria-label="注释监视器"><svg width="16" height="16" viewBox="0 0 16 16"><path class="lw thick" d="M8 0v16M0 8h16"/></svg></button>
                </div>
                <div class="group"><button aria-label="隔离对象"><svg width="16" height="16" viewBox="0 0 16 16"><path class="lw" d="M.500 .500h6v6h-6zM7 10l3 5.500H4z"/><circle class="lw" cx="12" cy="7" r="3"/></svg></button></div>
                <div class="group">
                    <button aria-label="硬件加速"><svg width="16" height="16" viewBox="0 0 16 16"><path fill="#246aa5" d="M1 3h10l3 3v8H1z"/><path class="lw" d="M4.500 0v9M0 4.500h13"/><path class="fy" d="M0 10h6v5H0z"/><path fill="none" stroke="#53a86b" stroke-width="3" d="M7 11l3 3 5-5"/></svg></button>
                    <button aria-label="图形性能"><svg width="16" height="16" viewBox="0 0 16 16"><path class="fw" d="M0 0h15v12H0z"/><path class="dark" d="M1 10l4-7 3 6 2-4 4 6"/><path fill="#f08a3c" d="M11 7l5 9H6z"/><path stroke="#fff" d="M11 10v3M11 14v1"/></svg></button>
                </div>
                <div class="group">
                    <button aria-label="全屏显示"><svg width="16" height="12" viewBox="0 0 16 12"><path class="lw" d="M.500 .500h15v11H.500zM4 9l3-3M9 5l3-3"/><path class="fw" d="M3 6v4h4zM9 2h4v4z"/></svg></button>
                    <button aria-label="自定义"><svg width="16" height="16" viewBox="0 0 16 16"><path class="fw" d="M0 1h16v2H0zM0 7h16v2H0zM0 13h16v2H0z"/></svg></button>
                </div>
            </div>
        </footer>
        <div class="watermark">激活 Windows</div>
    </div>

    <script>
        // Desenha a grade: uma linha principal a cada cinco
        const step = 18.772;
        let minor = '';
        let major = '';
        for (let i = -1; i < 160; i++) {
            const x = Math.round(8.6 + i * step) + 0.5;
            const y = Math.round(29.5 + i * step) + 0.5;
            const line = `M${x} 0V2000M0 ${y}H3000`;
            if (i % 5 === 0) {
                major += line;
            } else {
                minor += line;
            }
        }
        document.getElementById('gridMinor').setAttribute('d', minor);
        document.getElementById('gridMajor').setAttribute('d', major);
    </script>
</body>

</html>
```
FILE: styles.css
```
* {
    margin: 0;
    padding: 0;
    box-sizing: border-box;
}

body {
    background-color: #3d455b;
    color: #e4e7eb;
    font-family: "Noto Sans", "Noto Sans CJK SC", sans-serif;
    font-size: 12px;
    line-height: 18px;
}

button,
input,
select {
    font: inherit;
    color: inherit;
    background: none;
    border: none;
}

button {
    cursor: pointer;
    white-space: nowrap;
}

a {
    color: inherit;
    text-decoration: none;
}

select {
    appearance: none;
    outline: none;
}

svg {
    display: block;
    flex: none;
}

.symbols {
    position: absolute;
    width: 0;
    height: 0;
}

/* Cores dos ícones */
.fw { fill: #dcdfe2; }
.fb { fill: #7cc0fa; }
.fy { fill: #ffd27a; }
.fr { fill: #ee7350; }
.fg { fill: #69707c; }
.lw { stroke: #dcdfe2; }
.lb { stroke: #7cc0fa; }
.ly { stroke: #ffd27a; }
.lw:not(.fg), .lb:not(.fg), .ly, .dark { fill: none; }
.dark { stroke: #4a5058; }
.thick { stroke-width: 2; }
.gear { stroke-width: 3; }
.edge { stroke: #3b4457; stroke-width: 1; }

.caret {
    flex: none;
    width: 0;
    height: 0;
    border: 3px solid transparent;
    border-top-color: #dcdfe2;
    border-bottom: none;
}

.caret.large {
    border-width: 4px;
    border-bottom: none;
}

.caret.ink {
    border-top-color: #333;
}

.caret.grey {
    border-top-color: #666;
}

.app {
    display: flex;
    flex-direction: column;
    position: relative;
    min-height: 100vh;
    padding: 0 3px 4px 4px;
    overflow: hidden;
}

/* Barra de título */
.titlebar {
    display: flex;
    margin: 0 -3px 0 -4px;
    padding: 3px 3px 0 4px;
    background-color: #455067;
}

.app-button {
    display: flex;
    align-items: center;
    gap: 1px;
    width: 41px;
    height: 42px;
    padding-left: 2px;
    background: linear-gradient(#ccc, #7d8084);
    border: 1px solid #15191f;
}

.header-main {
    flex: 1;
    min-width: 0;
}

.title-row {
    display: flex;
    align-items: center;
    height: 24px;
}

.quick-access,
.info-center {
    display: flex;
    align-items: center;
    height: 24px;
    background-color: #212833;
}

.quick-access {
    padding-left: 5px;
}

.tool {
    display: flex;
    align-items: center;
    justify-content: center;
    flex: none;
    width: 24px;
    height: 24px;
}

.drop {
    display: flex;
    align-items: center;
    justify-content: center;
    width: 12px;
    height: 24px;
}

.drop.wide {
    width: 20px;
}

.dim {
    opacity: 0.4;
}

.layer-select {
    display: flex;
    align-items: center;
    gap: 3px;
    height: 22px;
    padding: 0 3px;
    background-color: #4a5972;
    border: 1px solid #2a3140;
}

.layer-select.quick {
    width: 180px;
    height: 20px;
    background-color: #364052;
    border: none;
}

.layer-select select {
    flex: 1;
    min-width: 0;
    margin-left: 2px;
}

.swatch {
    flex: none;
    width: 14px;
    height: 14px;
    background-color: #fff;
    outline: 1px solid #111;
}

.quick .swatch {
    margin-left: 2px;
}

.doc-title {
    flex: 1;
    padding-right: 17px;
    text-align: right;
    font-size: 12px;
    font-weight: normal;
    color: #929aa8;
}

.info-center {
    width: 445px;
    padding-left: 5px;
}

.arrow-right {
    border: 4px solid transparent;
    border-left-color: #dcdfe2;
    border-right: none;
    margin-right: 6px;
}

.search {
    width: 178px;
    height: 20px;
    padding: 0 3px;
    background-color: #414d5b;
    font-style: italic;
}

.search::placeholder {
    color: #b9bec6;
}

.login {
    display: flex;
    align-items: center;
    flex: 1;
    gap: 4px;
    padding-left: 5px;
}

.login .caret {
    margin: 0 6px 0 auto;
}

.separator {
    width: 1px;
    height: 18px;
    margin: 0 10px;
    background-color: #465060;
}

.help {
    width: 15px;
    height: 15px;
    margin-right: 6px;
    border-radius: 50%;
    background-color: #e8ebee;
    color: #26569b;
    font-weight: bold;
    line-height: 15px;
}

.info-center > .caret:last-child {
    margin-right: 4px;
}

.window-buttons {
    display: flex;
    gap: 11px;
    margin-left: 64px;
    padding-right: 4px;
}

.window-buttons.small {
    gap: 4px;
    margin-left: auto;
    padding-right: 1px;
}

.menu-row {
    display: flex;
    align-items: center;
    height: 22px;
    padding-top: 1px;
}

.menubar {
    display: flex;
    gap: 25px;
    padding-left: 13px;
    color: #a6adb8;
}

/* Faixa de opções */
.ribbon-tabs {
    display: flex;
    align-items: flex-end;
    height: 21px;
    padding-left: 3px;
    background-color: #212833;
    color: #b3b8c0;
}

.ribbon-tabs button {
    height: 18px;
    padding: 0 10px;
}

.ribbon-tabs .active {
    background-color: #3b4457;
    color: #fff;
}

.ribbon-tabs .ribbon-toggle {
    display: flex;
    align-items: center;
    gap: 6px;
    padding-left: 22px;
}

.ribbon {
    display: grid;
    grid-template-columns: 211fr 223fr 126fr 252fr 80fr 201fr 68fr 76fr 76fr 61fr;
    padding: 0 2px 0 1px;
    background-color: #212833;
}

.panel {
    display: flex;
    flex-direction: column;
    min-width: 0;
    height: 97px;
    padding-top: 5px;
    background-color: #3b4457;
    border-right: 1px solid #212833;
}

.panel-body {
    display: flex;
    flex: 1;
    padding: 0 2px;
}

.panel-body.modify {
    padding-left: 3px;
}

.panel-body.annotate {
    gap: 1px;
    padding-left: 5px;
}

.panel-body.spread {
    justify-content: space-around;
}

.panel-body.center {
    justify-content: center;
}

.big {
    display: flex;
    flex-direction: column;
    align-items: center;
    flex: none;
    width: 40px;
    padding-top: 2px;
}

.big svg {
    margin-bottom: 3px;
}

.big .caret {
    margin-top: 3px;
}

.big.two {
    display: block;
    width: 38px;
    line-height: 17px;
}

.big.two svg {
    margin: 0 auto 3px;
}

.stack {
    display: flex;
    flex-direction: column;
}

.stack.first {
    margin-left: 6px;
}

.stack.grow {
    flex: 1;
    min-width: 0;
    gap: 1px;
}

.stack.array {
    width: 71px;
}

.line {
    display: flex;
    align-items: center;
    height: 24px;
}

.line .caret {
    margin-left: 3px;
}

.command {
    display: flex;
    align-items: center;
    gap: 5px;
    height: 24px;
    padding: 0 10px 0 4px;
}

.command .caret {
    margin-left: 3px;
}

.checked {
    background-color: #34506f;
    border: 1px solid #7cc0fa;
}

.property {
    display: flex;
    align-items: center;
    height: 23px;
    padding: 0 3px;
    background-color: #4a5972;
    border: 1px solid #2a3140;
}

.property .swatch {
    width: 15px;
    height: 15px;
    margin: 0 10px 0 8px;
    outline: none;
}

.property select {
    flex: none;
    margin-right: auto;
}

.sample {
    flex: 1;
    height: 1px;
    margin-right: 2px;
    background-color: #fff;
}

.sample + select {
    margin-right: 12px;
}

.panel-title {
    display: flex;
    align-items: center;
    justify-content: center;
    gap: 6px;
    position: relative;
    height: 17px;
}

.panel-title.view {
    padding-right: 14px;
}

.launcher {
    position: absolute;
    right: 5px;
    bottom: 5px;
}

/* Abas de desenho */
.file-tabs {
    display: flex;
    align-items: flex-end;
    height: 31px;
    padding-left: 14px;
    background-color: #212833;
    border-bottom: 4px solid #3b4457;
}

.file-tab {
    display: flex;
    align-items: center;
    justify-content: space-between;
    width: 130px;
    height: 21px;
    padding: 0 18px;
    background-color: #32353f;
    color: #b3b8c0;
    clip-path: polygon(0 100%, 4% 85%, 9% 10%, 13% 0, 91% 0, 95% 10%, 98% 85%, 100% 100%);
}

.file-tab.active {
    width: 128px;
    padding: 0 16px 0 11px;
    background-color: #3b4457;
    color: #fff;
}

.new-tab {
    display: flex;
    align-items: center;
    justify-content: center;
    width: 22px;
    height: 15px;
    margin: 0 0 3px 3px;
    border-radius: 5px;
    background-color: #32353f;
    opacity: 0.8;
}

/* Área de trabalho */
.workspace {
    display: grid;
    flex: 1;
    grid-template-columns: 1fr 16px;
    grid-template-rows: 1fr 18px;
    position: relative;
    min-height: 420px;
}

.canvas {
    position: relative;
    overflow: hidden;
    background-color: #000;
}

.drawing {
    position: absolute;
    width: 100%;
    height: 100%;
}

.grid-minor,
.grid-major {
    fill: none;
    stroke: #151618;
}

.grid-major {
    stroke: #222a35;
}

.yellow-lines {
    fill: none;
    stroke: #e8e03c;
}

.white-lines {
    fill: none;
    stroke: #f0f0f0;
}

.view-cube {
    position: absolute;
    top: 20px;
    right: 22px;
    width: 110px;
    height: 112px;
    border: 10px solid #222831;
    border-radius: 50%;
    color: #b2b2b6;
    font-size: 17px;
    font-weight: 500;
}

.view-cube span,
.face {
    position: absolute;
    transform: translate(-50%, -50%);
    font-family: "Noto Sans CJK SC", sans-serif;
}

.north { top: -6px; left: 50%; }
.south { top: 98px; left: 50%; }
.west { top: 50%; left: -7px; }
.east { top: 50%; left: 97px; }

.face {
    top: 50%;
    left: 50%;
    width: 48px;
    height: 48px;
    background-color: #9c9da4;
    color: #44464c;
    font-size: 26px;
    font-weight: 300;
}

.wcs {
    display: flex;
    align-items: center;
    justify-content: space-between;
    position: absolute;
    top: 157px;
    right: 53px;
    width: 48px;
    height: 17px;
    padding: 0 4px;
    border: 1px solid #73747b;
    border-radius: 4px;
    background-color: #9697a0;
    color: #4c4d55;
    font-family: "Liberation Sans", sans-serif;
    font-size: 11px;
}

.nav-bar {
    position: absolute;
    top: 200px;
    right: 4px;
    border-radius: 4px;
    background-color: #4a4a4a;
}

.nav-lines {
    fill: none;
    stroke: #2b2b31;
}

.scroll {
    display: grid;
    background-color: #eee;
}

.scroll.vertical {
    grid-template-rows: 18px 568fr 17px 35fr 18px;
}

.scroll.vertical .thumb {
    grid-row: 3;
}

.scroll.vertical button:last-child {
    grid-row: 5;
}

.scroll.horizontal {
    grid-column: 1 / 3;
    grid-template-columns: 17px 122fr 17px 1188fr 34px;
    border-top: 1px solid #fff;
}

.scroll.horizontal .thumb {
    grid-column: 3;
}

.scroll.horizontal button:last-child {
    grid-column: 5;
}

.scroll button {
    display: flex;
    align-items: center;
    justify-content: center;
}

.scroll.horizontal button:last-child {
    padding-right: 15px;
}

.thumb {
    background-color: #c9cacc;
}

.arrow {
    fill: none;
    stroke: #555;
    stroke-width: 2;
}

.command-line {
    display: flex;
    align-items: center;
    position: absolute;
    left: 30%;
    bottom: 0;
    width: 40%;
    height: 27px;
    padding: 1px;
    background-color: #2b303d;
    border-radius: 3px;
}

.grip {
    width: 6px;
    height: 18px;
    margin: 0 4px;
    background: repeating-linear-gradient(#2b303d 0 1px, transparent 1px 3px), repeating-linear-gradient(90deg, #dcdfe2 0 2px, #2b303d 2px 4px);
}

.wrench {
    margin: 0 6px 0 11px;
}

.command-box {
    display: flex;
    align-items: center;
    flex: 1;
    height: 25px;
    padding: 0 3px 0 4px;
    background-color: #fff;
    border-radius: 2px;
}

.command-box .caret {
    margin: 0 3px 0 2px;
}

.text-cursor {
    width: 1px;
    height: 15px;
    background-color: #000;
}

.command-box input {
    flex: 1;
    min-width: 0;
    color: #000;
    outline: none;
}

.caret-up {
    border: 4px solid transparent;
    border-bottom-color: #666;
    border-top: none;
}

.pointer {
    position: absolute;
    left: 123px;
    top: 0;
}

/* Barra de status */
.statusbar {
    display: flex;
    justify-content: space-between;
    height: 29px;
    background-color: #212833;
}

.layout-tabs {
    display: flex;
    padding-left: 10px;
}

.layout-tabs button {
    width: 54px;
    height: 18px;
    background-color: #2b2f3a;
    color: #b3b8c0;
    clip-path: polygon(0 0, 100% 0, 90% 85%, 84% 100%, 16% 100%, 10% 85%);
}

.layout-tabs .active {
    width: 49px;
    background-color: #3b4457;
    color: #fff;
    font-weight: bold;
}

.layout-tabs .plus {
    display: flex;
    align-items: center;
    justify-content: center;
    width: 32px;
}

.status-tools {
    display: flex;
    gap: 3px;
    padding: 2px 2px 3px 0;
}

.group {
    display: flex;
    align-items: center;
    background-color: #3b4457;
}

.group button {
    display: flex;
    align-items: center;
    justify-content: center;
    width: 24px;
    height: 24px;
}

.group .on {
    background-color: #5b89c5;
    border-right: 1px solid #3b4457;
}

.group > .caret {
    margin: 0 4px 0 3px;
}

.group .model {
    width: 27px;
    color: #fff;
    font-weight: bold;
}

.group .scale {
    gap: 3px;
    width: 32px;
}

.watermark {
    position: absolute;
    right: -4px;
    bottom: -18px;
    color: #8c929e;
    font-size: 20px;
    line-height: 28px;
    white-space: nowrap;
    pointer-events: none;
}
```
